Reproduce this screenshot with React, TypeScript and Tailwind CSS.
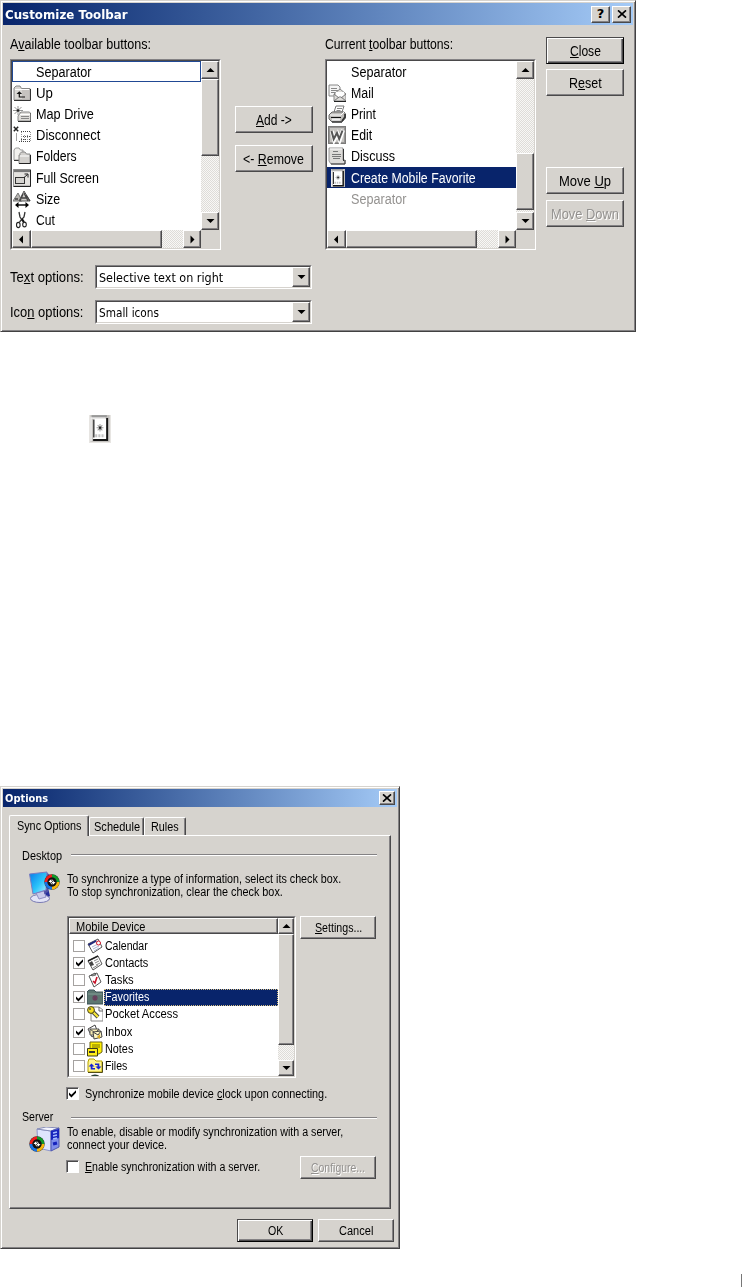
import { useLayoutEffect, useRef, useState } from "react";
import type { ReactNode } from "react";
import clsx from "clsx";

const raised =
  "bg-[#d6d3ce] border border-t-white border-l-white border-r-[#4a494a] border-b-[#4a494a] shadow-[inset_-1px_-1px_0_#848284]";
const sunken =
  "border border-t-[#848284] border-l-[#848284] border-r-white border-b-white";
const track =
  "bg-[#ebe9e5] bg-[repeating-conic-gradient(#f8f7f5_0_25%,#dedcd8_0_50%)] bg-[length:2px_2px]";

// Text squeezed to the narrow widths of the old system bitmap fonts
function Label({
  w,
  className,
  children,
}: {
  w: number;
  className?: string;
  children: ReactNode;
}) {
  const ref = useRef<HTMLSpanElement>(null);
  const [scale, setScale] = useState(1);

  useLayoutEffect(() => {
    if (ref.current) setScale(w / ref.current.offsetWidth);
  }, [w]);

  return (
    <span className={clsx("block shrink-0 leading-none", className)} style={{ width: w }}>
      <span
        ref={ref}
        className="inline-block origin-left whitespace-nowrap leading-none"
        style={{ transform: `scaleX(${scale})` }}
      >
        {children}
      </span>
    </span>
  );
}

function U({ children }: { children: ReactNode }) {
  return <span className="underline decoration-1 underline-offset-1">{children}</span>;
}

function Arrow({ dir }: { dir: "up" | "down" | "left" | "right" }) {
  const points = {
    up: "0.5,5 4.5,1 8.5,5",
    down: "0.5,1 8.5,1 4.5,5",
    left: "6,-0.5 6,7.5 2,3.5",
    right: "2.5,-0.5 2.5,7.5 6.5,3.5",
  };
  return (
    <svg width="9" height="7" viewBox="0 0 9 7" className="overflow-visible">
      <polygon points={points[dir]} fill="#000" />
    </svg>
  );
}

function ScrollButton({
  dir,
  className,
}: {
  dir: "up" | "down" | "left" | "right";
  className: string;
}) {
  return (
    <div className={clsx("flex shrink-0 items-center justify-center", raised, className)}>
      <Arrow dir={dir} />
    </div>
  );
}

function Button({
  className,
  isDefault,
  disabled,
  children,
}: {
  className?: string;
  isDefault?: boolean;
  disabled?: boolean;
  children: ReactNode;
}) {
  return (
    <button
      className={clsx(
        "flex shrink-0 items-center justify-center",
        isDefault
          ? "border border-t-[#4a494a] border-l-[#4a494a] border-r-black border-b-black bg-[#d6d3ce] shadow-[inset_1px_1px_0_#fff,inset_-1px_-1px_0_#4a494a,inset_-2px_-2px_0_#848284]"
          : raised,
        disabled && "text-[#949290] [text-shadow:1px_1px_0_#fff]",
        className
      )}
    >
      {children}
    </button>
  );
}

function CloseGlyph() {
  return (
    <svg width="10" height="8" viewBox="0 0 10 8">
      <path d="M1 0.3 9 7.7M9 0.3 1 7.7" stroke="#000" strokeWidth="1.6" />
    </svg>
  );
}

function Check({ checked, className }: { checked?: boolean; className?: string }) {
  return (
    <span className={clsx("flex shrink-0 items-center justify-center bg-white", className)}>
      {checked && (
        <svg width="9" height="9" viewBox="0 0 9 9">
          <path d="M1 3.5v2.6L3.4 8.5 8 3.8V1.2L3.4 5.8Z" fill="#000" />
        </svg>
      )}
    </span>
  );
}

/* Toolbar icons */

function DeviceIcon() {
  return (
    <>
      <rect x="3" y="0" width="14" height="18" fill="#c4c2bf" />
      <path d="M3.5 17.5V2H14" fill="none" stroke="#efefef" />
      <path d="M4 .8h11" stroke="#999" strokeWidth="1.4" />
      <rect x="5" y="2.5" width="9.5" height="13.5" fill="#fff" />
      <path d="M5.5 3v12" stroke="#333" />
      <path d="M15.2 2v14.7H5" fill="none" stroke="#151515" strokeWidth="1.4" />
      <path d="M7.5 8.5h5M10 6v5M8.3 6.8l3.4 3.4M11.7 6.8l-3.4 3.4" stroke="#999" strokeWidth=".7" />
      <path d="M9.3 8.5h1.6" stroke="#222" strokeWidth="1.4" />
      <path d="M6.5 13.8h7" stroke="#c4c4c4" strokeWidth="2" strokeDasharray="1.5 .8" />
    </>
  );
}

const toolbarIcons: Record<string, ReactNode> = {
  up: (
    <>
      <path d="M1 5V4l2-2h4l1.5 2.5H17V16H1Z" fill="#d9d7d4" stroke="#888" />
      <path d="M9 16V5h8v11Z" fill="#bdbbb8" opacity=".7" />
      <path d="M1 16.5h16.5V5" fill="none" stroke="#333" />
      <path d="M2 5.5h14" stroke="#fff" />
      <path d="M3.5 10 6.3 7.2 9.1 10Z" fill="#111" />
      <path d="M6.3 9v4H12" fill="none" stroke="#111" strokeWidth="1.2" />
    </>
  ),
  map: (
    <>
      <path d="M5 1v9M0 5.5h10M1.5 2l7 7M8.5 2l-7 7" stroke="#888" strokeWidth=".9" />
      <circle cx="5" cy="5.5" r="1.3" fill="#222" />
      <path d="M8 7h8.5L18 9v7H5v-5Z" fill="#dfddda" stroke="#888" />
      <path d="M5 16.5h13V8" fill="none" stroke="#333" />
      <path d="M8 11.5h8M8 13.5h8" stroke="#888" />
      <path d="M7 9.5h10" stroke="#fff" />
    </>
  ),
  disconnect: (
    <>
      <path d="m.8.8 4.4 4.4M5.2.8.8 5.2" stroke="#222" strokeWidth="1.5" />
      <path d="M3.5 7.5v8M8 5.5h10M6 15.5h12M8 13.5h9M8 10.5h9" stroke="#444" strokeDasharray="1 1" />
      <path d="M8.5 6v9M11.5 9v6M14.5 9v6M17.5 6v10" stroke="#999" strokeDasharray="1 1" />
    </>
  ),
  folders: (
    <>
      <path d="M1 3 2.5 1H6l1.5 2H10v10H1Z" fill="#f1f0ee" stroke="#999" />
      <path d="M1 13.5h6" stroke="#333" />
      <path d="M7 8V6.5L8.5 5H12l1.5 2H17v9.5H6V8Z" fill="#d2d0cd" stroke="#888" />
      <path d="M6 16.5h11.5V8" fill="none" stroke="#222" />
      <path d="M7 9h9" stroke="#fff" />
    </>
  ),
  full: (
    <>
      <rect x=".5" y=".5" width="17" height="16.5" fill="#e4e2df" stroke="#999" />
      <path d="M1 1.8h16" stroke="#777" strokeWidth="2.6" />
      <path d="M.5 17.5h17V1" fill="none" stroke="#222" />
      <rect x="2.5" y="8.5" width="9" height="6" fill="#d5d3d0" stroke="#333" />
      <path d="m11 8.5 3.5-3M11.5 5H15v3.5" fill="none" stroke="#222" />
    </>
  ),
  size: (
    <>
      <path d="M0 11 5 3l4 8Z" fill="#b8b6b3" stroke="#777" />
      <path d="M6 11 11 1l6 10Z" fill="#cfcdca" stroke="#555" />
      <path d="m10 4-3 7M11 3l4 8M13 5l4 6M2 9h3M9 8h5" fill="none" stroke="#444" strokeWidth="1.3" />
      <path d="M4 15h10" stroke="#000" strokeWidth="1.4" />
      <path d="m2 15 3.5-3v6ZM16 15l-3.5-3v6Z" fill="#000" />
    </>
  ),
  cut: (
    <>
      <path d="m6 1 1 5 4 6M12 1l-1 5-4.5 5" fill="none" stroke="#333" strokeWidth="1.3" />
      <path d="m9 8 2 3" stroke="#111" strokeWidth="1.8" />
      <ellipse cx="5.3" cy="14" rx="1.8" ry="2.6" fill="none" stroke="#222" strokeWidth="1.1" />
      <ellipse cx="11.5" cy="13.5" rx="1.8" ry="2.4" fill="none" stroke="#222" strokeWidth="1.1" />
    </>
  ),
  mail: (
    <>
      <path d="M1 1h9l2 2v9H1Z" fill="#f5f5f5" stroke="#888" />
      <path d="M3 4.5h6M3 6.5h7M3 8.5h4" stroke="#888" />
      <path d="m6 10 6-5 6 5v7H6Z" fill="#dedcd9" stroke="#888" />
      <path d="M8 8h8v4l-4 2-4-2Z" fill="#fff" />
      <path d="m6 17 5-4h2l5 4M6 10l5 4M18 10l-5 4" fill="none" stroke="#777" />
      <path d="M6 17.5h12" stroke="#222" />
    </>
  ),
  print: (
    <>
      <path d="M6 7 8 1h8l-2 6Z" fill="#fff" stroke="#777" />
      <path d="M9 3.5h5M8.5 5.5h4" stroke="#888" />
      <path d="M1 10 4 7h12l1.5 2v4L14 17H4l-3-3Z" fill="#c0bebb" stroke="#666" />
      <path d="M2 10h11l3-3" fill="none" stroke="#fff" />
      <path d="M3 12.5h10M4 17h10" stroke="#111" />
      <path d="M4 13.5h8v2H4Z" fill="#eee" />
      <path d="m14 16 3-4V9" fill="none" stroke="#333" strokeWidth="1.7" />
    </>
  ),
  edit: (
    <>
      <rect width="18" height="18" fill="#c6c4c1" />
      <rect x=".5" y=".5" width="17" height="17" fill="none" stroke="#333" strokeDasharray="1 1" />
      <rect x="1.5" y="1.5" width="15" height="15" fill="none" stroke="#666" strokeDasharray="1 1" />
      <path d="m4 5 2.2 9L9.5 8l2.2 6L15 4" fill="none" stroke="#fff" strokeWidth="4" />
      <path d="m3.5 5 2.2 8L9 7l2.2 6L14.5 4.5" fill="none" stroke="#555" strokeWidth="2" />
    </>
  ),
  discuss: (
    <>
      <path d="M1 1h14v12h2v4H3l-2-3Z" fill="#dddbd8" stroke="#999" />
      <path d="M15.5 2v12M3 17h14v-4" fill="none" stroke="#333" />
      <path d="M2 2h12" stroke="#fff" />
      <path d="M5 4.5h5M4 7.5h9M4 9.5h9M5 11.5h7" stroke="#777" />
    </>
  ),
  device: <DeviceIcon />,
};

function Dialog({
  title,
  titleWidth,
  className,
  titleClass,
  controls,
  children,
}: {
  title: string;
  titleWidth: number;
  className: string;
  titleClass: string;
  controls: ReactNode;
  children: ReactNode;
}) {
  return (
    <section
      className={clsx(
        "border border-t-[#d6d3ce] border-l-[#d6d3ce] border-r-[#424142] border-b-[#424142] bg-[#d6d3ce] p-0.5 shadow-[inset_1px_1px_0_#fff,inset_-1px_-1px_0_#848284]",
        className
      )}
    >
      <header
        className={clsx(
          "flex items-center bg-linear-to-r from-[#08246b] to-[#a5cbf7] pl-0.5 pr-0.5 font-['DejaVu_Sans'] font-bold text-white",
          titleClass
        )}
      >
        <Label w={titleWidth}>{title}</Label>
        <div className="ml-auto flex gap-0.5">{controls}</div>
      </header>
      {children}
    </section>
  );
}

type ToolbarItem = { text: string; w: number; icon?: string; state?: "focus" | "selected" | "disabled" };

const available: ToolbarItem[] = [
  { text: "Separator", w: 55, state: "focus" },
  { text: "Up", w: 17, icon: "up" },
  { text: "Map Drive", w: 58, icon: "map" },
  { text: "Disconnect", w: 64, icon: "disconnect" },
  { text: "Folders", w: 41, icon: "folders" },
  { text: "Full Screen", w: 63, icon: "full" },
  { text: "Size", w: 24, icon: "size" },
  { text: "Cut", w: 19, icon: "cut" },
];

const current: ToolbarItem[] = [
  { text: "Separator", w: 55 },
  { text: "Mail", w: 23, icon: "mail" },
  { text: "Print", w: 25, icon: "print" },
  { text: "Edit", w: 21, icon: "edit" },
  { text: "Discuss", w: 44, icon: "discuss" },
  { text: "Create Mobile Favorite", w: 125, icon: "device", state: "selected" },
  { text: "Separator", w: 55, state: "disabled" },
];

function ToolbarList({ items, children }: { items: ToolbarItem[]; children: ReactNode }) {
  return (
    <div className={clsx("h-[191px] w-[211px]", sunken)}>
      <div className="flex h-full flex-col border border-t-[#4a494a] border-l-[#4a494a] border-r-[#d6d3ce] border-b-[#d6d3ce]">
        <div className="flex h-[169px]">
          <ul className="w-[189px] overflow-hidden bg-white">
            {items.map((item, i) => (
              <li
                key={i}
                className={clsx(
                  "flex h-[21.2px] items-center",
                  item.state === "focus" && "shadow-[inset_0_0_0_1px_#214994]",
                  item.state === "selected" && "bg-[#08246b] text-white",
                  item.state === "disabled" && "text-[#949290]"
                )}
              >
                <span className="ml-px mr-[5px] w-[18px]">
                  {item.icon && (
                    <svg width="18" height="18" viewBox="0 0 18 18">
                      {toolbarIcons[item.icon]}
                    </svg>
                  )}
                </span>
                <Label w={item.w}>{item.text}</Label>
              </li>
            ))}
          </ul>
          <div className={clsx("flex w-[18px] flex-col", track)}>
            <ScrollButton dir="up" className="h-[18px]" />
            {children}
            <ScrollButton dir="down" className="mt-auto h-[18px]" />
          </div>
        </div>
        <div className="flex h-[18px] bg-[#d6d3ce]">
          <div className={clsx("flex w-[189px]", track)}>
            <ScrollButton dir="left" className="w-[19px]" />
            <div className={clsx("w-[131px]", raised)} />
            <ScrollButton dir="right" className="ml-auto w-[18px]" />
          </div>
        </div>
      </div>
    </div>
  );
}

function Combo({ label, w, value, valueWidth }: { label: ReactNode; w: number; value: string; valueWidth: number }) {
  return (
    <div className="flex h-6 items-center">
      <div className="w-[85px]">
        <Label w={w}>{label}</Label>
      </div>
      <div className={clsx("h-6 w-[217px]", sunken)}>
        <div className="flex h-full items-center border border-t-[#4a494a] border-l-[#4a494a] border-r-[#d6d3ce] border-b-[#d6d3ce] bg-white pl-0.5">
          <Label w={valueWidth} className="pt-px font-['DejaVu_Sans'] text-[13px]">
            {value}
          </Label>
          <ScrollButton dir="down" className="ml-auto h-5 w-[18px]" />
        </div>
      </div>
    </div>
  );
}

function CustomizeToolbar() {
  return (
    <Dialog
      title="Customize Toolbar"
      titleWidth={123}
      className="h-[332px] w-[636px] text-[14px]"
      titleClass="h-[22px] text-[13px]"
      controls={
        <>
          <Button className="h-[17px] w-[19px] text-[13px] font-bold text-black">?</Button>
          <Button className="h-[17px] w-[19px]">
            <CloseGlyph />
          </Button>
        </>
      }
    >
      <div className="flex pl-[7px]">
        <div className="w-[526px]">
          <div className="flex justify-between">
            <div>
              <div className="flex h-[34px] items-center pt-1">
                <Label w={141}>
                  A<U>v</U>ailable toolbar buttons:
                </Label>
              </div>
              <ToolbarList items={available}>
                <div className={clsx("h-[77px]", raised)} />
              </ToolbarList>
            </div>
            <div className="flex flex-col gap-3 pl-px pt-[81px]">
              <Button className="h-[27px] w-[78px]">
                <Label w={36}>
                  <U>A</U>dd -&gt;
                </Label>
              </Button>
              <Button className="h-[27px] w-[78px]">
                <Label w={61}>
                  &lt;- <U>R</U>emove
                </Label>
              </Button>
            </div>
            <div>
              <div className="flex h-[34px] items-center pt-1">
                <Label w={128}>
                  Current <U>t</U>oolbar buttons:
                </Label>
              </div>
              <ToolbarList items={current}>
                <div className={clsx("mt-[74px] h-[57px]", raised)} />
              </ToolbarList>
            </div>
          </div>
          <div className="mt-[15px] flex flex-col gap-[11px]">
            <Combo label={<>Te<U>x</U>t options:</>} w={74} value="Selective text on right" valueWidth={124} />
            <Combo label={<>Ico<U>n</U> options:</>} w={73} value="Small icons" valueWidth={60} />
          </div>
        </div>
        <div className="ml-2.5 flex flex-col pt-3">
          <Button isDefault className="h-[27px] w-[78px]">
            <Label w={31}>
              <U>C</U>lose
            </Label>
          </Button>
          <Button className="mt-[5px] h-[27px] w-[78px]">
            <Label w={33}>
              R<U>e</U>set
            </Label>
          </Button>
          <Button className="mt-[71px] h-[27px] w-[78px]">
            <Label w={52}>
              Move <U>U</U>p
            </Label>
          </Button>
          <Button disabled className="mt-1.5 h-[27px] w-[78px]">
            <Label w={68}>
              Move <U>D</U>own
            </Label>
          </Button>
        </div>
      </div>
    </Dialog>
  );
}

/* Sync icons */

function SyncBadge({ x, y }: { x: number; y: number }) {
  return (
    <g transform={`translate(${x} ${y})`}>
      <circle cx="8" cy="8" r="7.7" fill="#333" />
      <path d="M8 2a6 6 0 0 0-6 6" fill="none" stroke="#f21b1b" strokeWidth="2.8" />
      <path d="M8 2a6 6 0 0 1 6 6" fill="none" stroke="#109a28" strokeWidth="2.8" />
      <path d="M14 8a6 6 0 0 1-6 6" fill="none" stroke="#f6b50c" strokeWidth="2.8" />
      <path d="M8 14a6 6 0 0 1-6-6" fill="none" stroke="#1773e8" strokeWidth="2.8" />
      <circle cx="8" cy="8" r="4.5" fill="#111" />
      <path d="M4.5 8 6.5 5.5 8.5 8ZM7.5 8h4l-2 2.5Z" fill="#fff" />
      <path d="M6.5 7.5c0 2 1 2.5 2 2.5M9.5 8.500c0-2-1-2.500-2-2.500" fill="none" stroke="#fff" />
    </g>
  );
}

function DesktopIcon() {
  return (
    <svg width="32" height="33" viewBox="0 0 32 33">
      <defs>
        <linearGradient id="screen" x1="0" y1="0" x2="1" y2="1">
          <stop offset="0" stopColor="#0879e8" />
          <stop offset=".55" stopColor="#2cc4fa" />
          <stop offset="1" stopColor="#b5f0ff" />
        </linearGradient>
      </defs>
      <path d="m14 19 5-2 2 8-5 3Z" fill="#262f9c" />
      <ellipse cx="11" cy="27.500" rx="9.500" ry="4" fill="#e3e4f6" stroke="#7a7bb4" />
      <path d="m7 22 8-2 2 6-7 2Z" fill="#c8caea" stroke="#8d8fc4" />
      <path d="m17 1 4 3-2 17-4 2Z" fill="#5154a6" />
      <path d="M.5 3 18 1l-1 18-13 4Z" fill="url(#screen)" stroke="#7b7dc0" />
      <SyncBadge x={15} y={3} />
    </svg>
  );
}

function ServerIcon() {
  return (
    <svg width="32" height="27" viewBox="0 0 32 27">
      <path d="M8 2 22 4v20L9 21Z" fill="#dfe5fd" stroke="#8d96cd" />
      <path d="m8 2 9-2 13 1-8 3Z" fill="#f4f5ff" stroke="#888eb8" />
      <path d="m22 4 8-3v19l-8 4Z" fill="#7f8eea" stroke="#5058af" />
      <path d="m22 4 8-2v9l-8 2Z" fill="#1623bc" />
      <path d="m24 6 4-1M24 9l4-1M24 12l4-1" stroke="#a6bdff" strokeWidth="1.3" />
      <path d="m24 17 4-1" stroke="#1623bc" strokeWidth="3" />
      <SyncBadge x={0} y={9} />
    </svg>
  );
}

const deviceIcons: Record<string, ReactNode> = {
  calendar: (
    <>
      <path d="m1 6 10-5 4 8-9 6Z" fill="#fff" stroke="#555" />
      <path d="m1 6 8-4 .8 1.500L2 8Z" fill="#222a7c" />
      <path d="m5 9 6-3M6 11l6-3M7 13l5-3" stroke="#aab6d2" />
      <circle cx="11.500" cy="5" r="2" fill="#fff" stroke="#d2182a" />
    </>
  ),
  contacts: (
    <>
      <path d="m1 6 10-5 4 8-9 6Z" fill="#fff" stroke="#555" />
      <path d="m2 8 3-2 2 4-3 1Z" fill="#444" />
      <path d="m7 6 4-2M8 8l4-2M9 10l4-2M6 13l5-3" stroke="#888" />
      <path d="m1 6 10-5" stroke="#222" strokeWidth="1.500" />
    </>
  ),
  tasks: (
    <>
      <path d="M2 4 10 1l4 9-7 5Z" fill="#fff" stroke="#555" />
      <path d="m4 3 4-2 1 2-4 1Z" fill="#999" stroke="#333" strokeWidth=".6" />
      <path d="m6 9 2 2 2-6" fill="none" stroke="#c71329" strokeWidth="1.600" />
    </>
  ),
  favorites: (
    <>
      <path d="M0 3 2 1h5l2 2h7v12H0Z" fill="#5d7771" stroke="#3d5258" />
      <path d="M1 5h14" stroke="#829c95" />
      <path d="M8 6v6M5 9h6M6 7l4 4M10 7l-4 4" stroke="#683e5c" strokeWidth="1.200" />
    </>
  ),
  pocket: (
    <>
      <path d="M4 1h8l4 3v11H4Z" fill="#fff" stroke="#888" />
      <path d="M12 1v4h4" fill="none" stroke="#666" />
      <path d="m5 5 6 6" stroke="#444" strokeWidth="4" />
      <path d="m5 5 6 6" stroke="#f7e83b" strokeWidth="2.200" />
      <circle cx="4" cy="4" r="3.400" fill="#f4df22" stroke="#4a451a" />
      <circle cx="3" cy="3" r="1" fill="#555" />
    </>
  ),
  inbox: (
    <>
      <path d="m1 5 7-4 3 8-6 4Z" fill="#fff" stroke="#444" />
      <path d="M3 5h9v6H3Z" fill="#f5e9b0" stroke="#555" />
      <path d="m3 5 5 4 4-4" fill="none" stroke="#555" />
      <path d="m6 8 8-1 1 6-8 2Z" fill="#fff7c4" stroke="#444" />
      <path d="m6 8 5 3 3-4" fill="none" stroke="#444" />
      <path d="m10 13 3-3v5Z" fill="#d8aa24" />
    </>
  ),
  notes: (
    <>
      <path d="M3 1h12v10l-3 2H3Z" fill="#fff000" stroke="#6b641c" />
      <path d="M5 4h8M5 6h8" stroke="#777000" />
      <path d="M.5 7.500h10V15H.5Z" fill="#ffee19" stroke="#3d3b16" />
      <path d="M2 11h6" stroke="#333" strokeWidth="2" />
    </>
  ),
  files: (
    <>
      <path d="M1 4 2 1h5l2 2h6v11H1Z" fill="#fff68f" stroke="#b5a100" />
      <path d="M1 14.500h14.500V4" fill="none" stroke="#514d18" />
      <path d="m1.500 8.500 3-3 3 3h-2V10H8v1.500H3.700v-3ZM14.500 8.500l-3 3-3-3h2V7H8V5.500h4.300v3Z" fill="#1724d4" />
    </>
  ),
  mobile: (
    <>
      <circle cx="8" cy="8" r="7" fill="#168050" stroke="#222" />
      <path d="m6 2 4 2-2 4-5-3Z" fill="#45b5d0" />
    </>
  ),
};

const deviceItems = [
  { text: "Calendar", w: 43, icon: "calendar" },
  { text: "Contacts", w: 43, icon: "contacts", checked: true },
  { text: "Tasks", w: 29, icon: "tasks" },
  { text: "Favorites", w: 44, icon: "favorites", checked: true, selected: true },
  { text: "Pocket Access", w: 73, icon: "pocket" },
  { text: "Inbox", w: 27, icon: "inbox", checked: true },
  { text: "Notes", w: 28, icon: "notes" },
  { text: "Files", w: 22, icon: "files" },
];

function DeviceList() {
  return (
    <div className={clsx("h-[162px] w-[229px]", sunken)}>
      <div className="flex h-full border border-t-[#4a494a] border-l-[#4a494a] border-r-[#d6d3ce] border-b-[#d6d3ce] bg-white">
        <div className="w-[209px] overflow-hidden">
          <div className={clsx("mb-[3px] flex h-4 items-center pl-1.5 pt-px", raised)}>
            <Label w={69}>Mobile Device</Label>
          </div>
          {deviceItems.map((item) => (
            <div key={item.text} className="flex h-[17.2px] items-center pl-1">
              <Check checked={item.checked} className="size-3 border border-[#a5a2a0]" />
              <svg width="16" height="16" viewBox="0 0 16 16" className="ml-0.5 shrink-0">
                {deviceIcons[item.icon]}
              </svg>
              <div
                className={clsx(
                  "ml-px flex h-full flex-1 items-center pl-px",
                  item.selected && "outline-1 -outline-offset-1 outline-dotted outline-[#d4bf82] bg-[#08246b] text-white"
                )}
              >
                <Label w={item.w}>{item.text}</Label>
              </div>
            </div>
          ))}
          <svg width="16" height="16" viewBox="0 0 16 16" className="-mt-px ml-[18px]">
            {deviceIcons.mobile}
          </svg>
        </div>
        <div className={clsx("flex w-4 flex-col", track)}>
          <ScrollButton dir="up" className="h-4" />
          <div className={clsx("h-[111px]", raised)} />
          <ScrollButton dir="down" className="mt-auto h-4" />
        </div>
      </div>
    </div>
  );
}

function GroupTitle({ title, w, className }: { title: string; w: number; className?: string }) {
  return (
    <div className="flex h-5 items-center pl-3">
      <div className="w-[49px]">
        <Label w={w}>{title}</Label>
      </div>
      <div className={clsx("h-0.5 w-[306px] border-t border-[#848284] bg-white", className)} />
    </div>
  );
}

function OptionsDialog() {
  const tab =
    "flex items-center justify-center rounded-t-[2px] border border-b-0 border-t-white border-l-white border-r-[#4a494a] bg-[#d6d3ce] shadow-[inset_-1px_0_0_#848284]";
  return (
    <Dialog
      title="Options"
      titleWidth={43}
      className="h-[463px] w-[400px] text-[12px]"
      titleClass="h-[18px] text-[11px]"
      controls={
        <Button className="h-[14px] w-4">
          <CloseGlyph />
        </Button>
      }
    >
      <div className="px-1.5">
        <div className="flex h-[28px] items-end">
          <div className={clsx("relative z-10 -mb-px h-[21px] w-[80px]", tab)}>
            <Label w={64}>Sync Options</Label>
          </div>
          <div className={clsx("h-[18px] w-[55px] pt-px", tab)}>
            <Label w={46}>Schedule</Label>
          </div>
          <div className={clsx("h-[18px] w-[42px] pt-px", tab)}>
            <Label w={28}>Rules</Label>
          </div>
        </div>
        <div className="h-[374px] w-[382px] border border-t-white border-l-white border-r-[#4a494a] border-b-[#4a494a] pt-2.5 shadow-[inset_-1px_-1px_0_#848284]">
          <GroupTitle title="Desktop" w={40} className="mb-[3px]" />
          <div className="flex h-[50px] pl-[19px] pt-[5px]">
            <DesktopIcon />
            <div className="flex flex-col gap-px pl-1.5 pt-0.5">
              <Label w={274}>To synchronize a type of information, select its check box.</Label>
              <Label w={216}>To stop synchronization, clear the check box.</Label>
            </div>
          </div>
          <div className="flex gap-1 pl-[57px]">
            <DeviceList />
            <Button className="h-[23px] w-[76px]">
              <Label w={47}>
                <U>S</U>ettings...
              </Label>
            </Button>
          </div>
          <div className="mt-[9px] flex items-center gap-1.5 pl-14">
            <Check checked className="size-[13px] border border-t-[#848284] border-l-[#848284] border-white shadow-[inset_1px_1px_0_#4a494a]" />
            <Label w={242}>
              Synchronize mobile device <U>c</U>lock upon connecting.
            </Label>
          </div>
          <div className="mt-[7px]">
            <GroupTitle title="Server" w={31} className="mt-px" />
          </div>
          <div className="flex h-[27px] pl-[19px]">
            <ServerIcon />
            <div className="-mt-px flex flex-col gap-px pl-1.5">
              <Label w={276}>To enable, disable or modify synchronization with a server,</Label>
              <Label w={100}>connect your device.</Label>
            </div>
          </div>
          <div className="mt-0.5 flex pl-14">
            <div className="mt-1 flex h-[13px] w-[234px] items-center gap-1.5">
              <Check className="size-[13px] border border-t-[#848284] border-l-[#848284] border-white shadow-[inset_1px_1px_0_#4a494a]" />
              <Label w={175}>
                <U>E</U>nable synchronization with a server.
              </Label>
            </div>
            <Button disabled className="h-[23px] w-[76px]">
              <Label w={54}>
                <U>C</U>onfigure...
              </Label>
            </Button>
          </div>
        </div>
        <div className="flex justify-end gap-[5px] pt-2.5">
          <Button isDefault className="h-[23px] w-[76px]">
            <Label w={15}>OK</Label>
          </Button>
          <Button className="-mr-[3px] h-[23px] w-[76px]">
            <Label w={34}>Cancel</Label>
          </Button>
        </div>
      </div>
    </Dialog>
  );
}

export default function App() {
  return (
    <main className="flex h-[1287px] w-[742px] flex-col bg-white font-['Liberation_Sans',sans-serif] text-black">
      <CustomizeToolbar />
      <div className="ml-[89px] mt-[83px] h-7 w-[22px] bg-[#e7e5e2]">
        <svg width="22" height="27" viewBox="2 0 16 18" preserveAspectRatio="none">
          <DeviceIcon />
        </svg>
      </div>
      <div className="mt-[343px]">
        <OptionsDialog />
      </div>
      <div className="ml-auto mt-[25px] h-[13px] w-px bg-[#777]" />
    </main>
  );
}
